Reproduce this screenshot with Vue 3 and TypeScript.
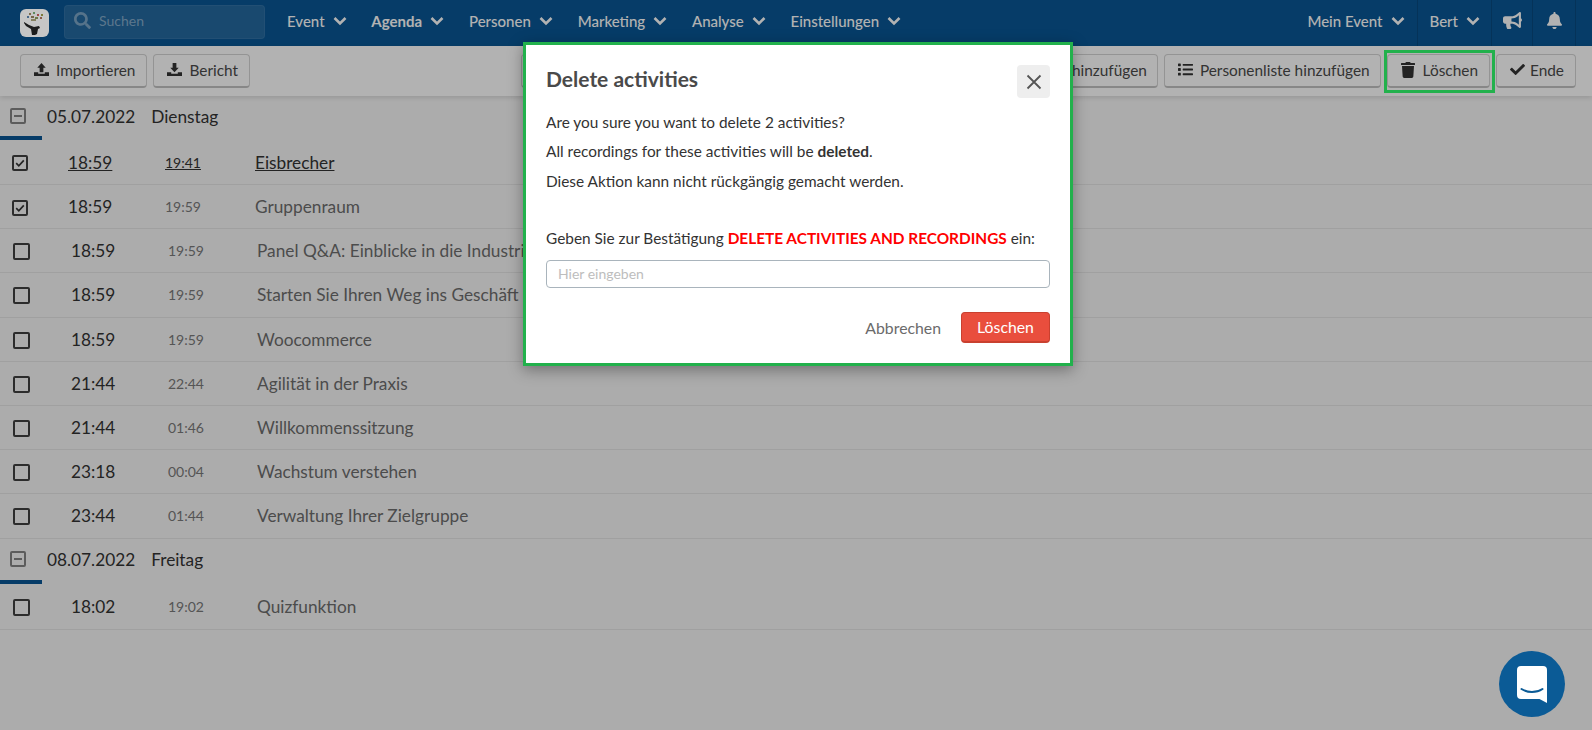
<script setup lang="ts">
interface Row { start: string; end: string; title: string; checked?: boolean; hover?: boolean }
interface Day { date: string; weekday: string; rows: Row[] }

const navItems = [
  { label: 'Event' },
  { label: 'Agenda', active: true },
  { label: 'Personen' },
  { label: 'Marketing' },
  { label: 'Analyse' },
  { label: 'Einstellungen' },
]

const days: Day[] = [
  {
    date: '05.07.2022',
    weekday: 'Dienstag',
    rows: [
      { start: '18:59', end: '19:41', title: 'Eisbrecher', checked: true, hover: true },
      { start: '18:59', end: '19:59', title: 'Gruppenraum', checked: true },
      { start: '18:59', end: '19:59', title: 'Panel Q&A: Einblicke in die Industrie' },
      { start: '18:59', end: '19:59', title: 'Starten Sie Ihren Weg ins Geschäft' },
      { start: '18:59', end: '19:59', title: 'Woocommerce' },
      { start: '21:44', end: '22:44', title: 'Agilität in der Praxis' },
      { start: '21:44', end: '01:46', title: 'Willkommenssitzung' },
      { start: '23:18', end: '00:04', title: 'Wachstum verstehen' },
      { start: '23:44', end: '01:44', title: 'Verwaltung Ihrer Zielgruppe' },
    ],
  },
  {
    date: '08.07.2022',
    weekday: 'Freitag',
    rows: [{ start: '18:02', end: '19:02', title: 'Quizfunktion' }],
  },
]
</script>

<template>
  <div class="page">
    <header class="topbar">
      <div class="logo">
        <svg viewBox="0 0 29 28" width="29" height="28">
          <rect x="9" y="4" width="2" height="2" fill="#7d6a4a" />
          <rect x="13" y="3" width="2" height="2" fill="#5f8a5f" />
          <rect x="17" y="5" width="2" height="2" fill="#a04a4a" />
          <rect x="21" y="5" width="2" height="2" fill="#7a7a3a" />
          <rect x="7" y="7" width="2" height="2" fill="#4a6a8a" />
          <rect x="11" y="7" width="3" height="2" fill="#77664a" />
          <rect x="15" y="8" width="3" height="2" fill="#6c7a4a" />
          <rect x="20" y="8" width="2" height="2" fill="#8a5a4a" />
          <rect x="11" y="10" width="5" height="2" fill="#85805f" />
          <path d="M4 13l5 3 5 2 5-1 1 2-2 1-1 5-2 1h-3l-1-6-5-3-2-3z" fill="#1c1c1c" />
        </svg>
      </div>
      <div class="search">
        <svg class="search-icon" viewBox="0 0 512 512" width="17" height="17">
          <path fill="currentColor" d="M505 442.700L405.300 343c-4.500-4.500-10.600-7-17-7H372c27.600-35.300 44-79.700 44-128C416 93.100 322.900 0 208 0S0 93.100 0 208s93.100 208 208 208c48.300 0 92.700-16.400 128-44v16.300c0 6.400 2.500 12.500 7 17l99.700 99.700c9.400 9.400 24.600 9.400 33.900 0l28.300-28.300c9.400-9.400 9.400-24.600.1-34zM208 336c-70.700 0-128-57.200-128-128 0-70.700 57.200-128 128-128 70.700 0 128 57.200 128 128 0 70.700-57.200 128-128 128z" />
        </svg>
        <span>Suchen</span>
      </div>
      <nav class="nav">
        <a v-for="item in navItems" :key="item.label" class="nav-item" :class="{ active: item.active }">
          {{ item.label }}
          <svg class="chev" viewBox="0 0 14 10" width="14" height="10"><path d="M1.500 2l5.500 5.500L12.500 2" fill="none" stroke="currentColor" stroke-width="2.600" /></svg>
        </a>
      </nav>
      <div class="top-right">
        <a class="nav-item tr tr-event">Mein Event
          <svg class="chev" viewBox="0 0 14 10" width="14" height="10"><path d="M1.500 2l5.500 5.500L12.500 2" fill="none" stroke="currentColor" stroke-width="2.600" /></svg>
        </a>
        <a class="nav-item tr tr-user">Bert
          <svg class="chev" viewBox="0 0 14 10" width="14" height="10"><path d="M1.500 2l5.500 5.500L12.500 2" fill="none" stroke="currentColor" stroke-width="2.600" /></svg>
        </a>
        <a class="tr tr-icon tr-horn">
          <svg viewBox="0 0 576 512" width="19" height="17"><path fill="currentColor" d="M576 240c0-23.600-13-44-32-55V32c0-9-7-32-32-32-7 0-14 2.400-20 7.100l-85 68C364.300 109.200 310.700 128 256 128H64c-35.300 0-64 28.700-64 64v96c0 35.300 28.700 64 64 64h33.700c-1.400 10.500-2.200 21.100-2.200 32 0 39.800 9.300 77.400 25.600 110.900 5.200 10.700 16.500 17.100 28.400 17.100h74.300c26.100 0 41.700-29.900 25.900-50.700-16.400-21.600-26.200-48.500-26.200-77.300 0-11.100 1.600-21.800 4.400-32H256c54.700 0 108.300 18.800 151 53l85 68c5.800 4.600 13 7 20 7 25 0 32-22.400 32-32V295c19-11 32-31.400 32-55zm-96 141.400l-33-26.400C391.900 311 325 288 256 288V192c69 0 135.900-23 191-67l33-26.400v282.800z" /></svg>
        </a>
        <a class="tr tr-icon tr-bell">
          <svg viewBox="0 0 448 512" width="15" height="17"><path fill="currentColor" d="M224 512c35.300 0 64-28.700 64-64H160c0 35.300 28.700 64 64 64zm215.400-149.700c-19.300-20.800-55.500-52-55.500-154.300 0-77.700-54.500-139.900-127.900-155.200V32c0-17.700-14.300-32-32-32s-32 14.300-32 32v20.800C118.600 68.100 64.100 130.300 64.100 208c0 102.300-36.200 133.500-55.500 154.300-6 6.400-8.700 14.100-8.600 21.700.1 16.400 13 32 32.100 32h383.800c19.100 0 32-15.600 32.100-32 .1-7.600-2.600-15.300-8.600-21.700z" /></svg>
        </a>
      </div>
    </header>

    <div class="toolbar">
      <button class="btn">
        <svg viewBox="0 0 16 16" width="15" height="15"><path fill="currentColor" d="M8 1l4.500 5H10v5H6V6H3.500L8 1zM0 11h4.500v1.500h7V11H16v4H0v-4z" /></svg>
        Importieren
      </button>
      <button class="btn">
        <svg viewBox="0 0 16 16" width="15" height="15"><path fill="currentColor" d="M6 1h4v5h2.500L8 11 3.500 6H6V1zM0 11h4.500v1.500h7V11H16v4H0v-4z" /></svg>
        Bericht
      </button>
      <div class="spacer"></div>
      <div class="covered">
        <button class="btn">Pause</button>
        <button class="btn">Sitzung hinzufügen</button>
      </div>
      <button class="btn btn-list">
        <svg viewBox="0 0 512 512" width="15" height="15"><path fill="currentColor" d="M80 368H16a16 16 0 0 0-16 16v64a16 16 0 0 0 16 16h64a16 16 0 0 0 16-16v-64a16 16 0 0 0-16-16zm0-320H16A16 16 0 0 0 0 64v64a16 16 0 0 0 16 16h64a16 16 0 0 0 16-16V64a16 16 0 0 0-16-16zm0 160H16a16 16 0 0 0-16 16v64a16 16 0 0 0 16 16h64a16 16 0 0 0 16-16v-64a16 16 0 0 0-16-16zm416 176H176a16 16 0 0 0-16 16v32a16 16 0 0 0 16 16h320a16 16 0 0 0 16-16v-32a16 16 0 0 0-16-16zm0-320H176a16 16 0 0 0-16 16v32a16 16 0 0 0 16 16h320a16 16 0 0 0 16-16V80a16 16 0 0 0-16-16zm0 160H176a16 16 0 0 0-16 16v32a16 16 0 0 0 16 16h320a16 16 0 0 0 16-16v-32a16 16 0 0 0-16-16z" /></svg>
        Personenliste hinzufügen
      </button>
      <button class="btn btn-del">
        <svg viewBox="0 0 448 512" width="14" height="16"><path fill="currentColor" d="M432 32H312l-9.400-18.700A24 24 0 0 0 281.100 0H166.800a23.700 23.700 0 0 0-21.400 13.300L136 32H16A16 16 0 0 0 0 48v32a16 16 0 0 0 16 16h416a16 16 0 0 0 16-16V48a16 16 0 0 0-16-16zM53.200 467a48 48 0 0 0 47.900 45h245.800a48 48 0 0 0 47.900-45L416 128H32z" /></svg>
        Löschen
      </button>
      <button class="btn btn-end">
        <svg viewBox="0 0 512 512" width="15" height="15"><path fill="currentColor" d="M173.900 439.400l-166.400-166.400c-10-10-10-26.200 0-36.200l36.200-36.200c10-10 26.200-10 36.200 0L192 312.700 432.100 72.600c10-10 26.200-10 36.200 0l36.200 36.200c10 10 10 26.200 0 36.200l-294.400 294.400c-10 10-26.200 10-36.200 0z" /></svg>
        Ende
      </button>
    </div>

    <main class="agenda">
      <section v-for="day in days" :key="day.date" class="day">
        <div class="day-head">
          <span class="collapse"><i></i></span>
          <span class="day-date">{{ day.date }}</span>
          <span class="day-name">{{ day.weekday }}</span>
        </div>
        <div v-for="row in day.rows" :key="row.title" class="row" :class="{ sel: row.checked, hover: row.hover }">
          <span class="check">
            <svg v-if="row.checked" viewBox="0 0 12 12" width="12" height="12"><path d="M2.200 6.200l2.600 2.600 5-5.400" fill="none" stroke="currentColor" stroke-width="1.700" /></svg>
          </span>
          <span class="t-start">{{ row.start }}</span>
          <span class="t-end">{{ row.end }}</span>
          <span class="t-title">{{ row.title }}</span>
        </div>
      </section>
    </main>

    <div class="backdrop"></div>

    <div class="mark"></div>

    <div class="modal-wrap">
      <div class="modal">
        <div class="modal-head">
          <h2>Delete activities</h2>
          <button class="close" aria-label="Schließen">
            <svg viewBox="0 0 18 18" width="18" height="18"><path d="M2.500 2.500l13 13M15.500 2.500l-13 13" stroke="currentColor" stroke-width="1.800" fill="none" /></svg>
          </button>
        </div>
        <p>Are you sure you want to delete 2 activities?</p>
        <p>All recordings for these activities will be <b>deleted</b>.</p>
        <p>Diese Aktion kann nicht rückgängig gemacht werden.</p>
        <label class="confirm">Geben Sie zur Bestätigung <b>DELETE ACTIVITIES AND RECORDINGS</b> ein:</label>
        <input class="field" placeholder="Hier eingeben" />
        <div class="actions">
          <button class="cancel">Abbrechen</button>
          <button class="danger">Löschen</button>
        </div>
      </div>
    </div>

    <button class="chat" aria-label="Chat">
      <svg viewBox="0 0 30 37" width="30" height="37">
        <path fill="#fff" d="M4 0h22a4 4 0 0 1 4 4v33l-7.500-4H4a4 4 0 0 1-4-4V4a4 4 0 0 1 4-4z" />
        <path d="M4.500 23c6 4 15 4 21 0" fill="none" stroke="#0b5b96" stroke-width="2" stroke-linecap="round" />
      </svg>
    </button>
  </div>
</template>

<style>
html, body { margin: 0; padding: 0; overflow: hidden; }
</style>

<style scoped>
.page {
  position: relative;
  width: 1592px;
  height: 730px;
  overflow: hidden;
  background: #f7f7f7;
  font-family: Lato, "Noto Sans", sans-serif;
  color: #333;
}
.topbar {
  display: flex;
  align-items: center;
  height: 46px;
  background: #0a5795;
  color: #fff;
  padding-left: 20px;
  box-sizing: border-box;
}
.logo {
  width: 29px;
  height: 28px;
  flex: none;
  border-radius: 6px;
  background: #c6c6c6;
  position: relative;
  z-index: 6;
}
.logo svg { display: block; }
.search {
  display: flex;
  align-items: center;
  gap: 8px;
  box-sizing: border-box;
  width: 201px;
  height: 34px;
  margin: 0 0 2px 15px;
  padding: 0 0 3px 9px;
  border-radius: 4px;
  background: rgba(255, 255, 255, .11);
  border: 1px solid rgba(255, 255, 255, .06);
  font-size: 14px;
  color: rgba(255, 255, 255, .45);
}
.search-icon { color: rgba(255, 255, 255, .4); }
.nav { display: flex; margin-left: 22px; gap: 24.800px; }
.nav-item {
  display: flex;
  align-items: center;
  gap: 8px;
  font-size: 15px;
  font-weight: 500;
  white-space: nowrap;
  color: #fff;
  padding-bottom: 5px;
}
.nav-item.active { font-weight: 700; }
.chev { display: block; }
.top-right { display: flex; margin-left: auto; align-items: stretch; height: 46px; }
.tr { box-sizing: border-box; display: flex; align-items: center; justify-content: center; border-right: 1px solid rgba(0, 0, 0, .14); height: 46px; padding-bottom: 5px; }
.tr-event { padding-right: 12px; }
.tr-user { padding-left: 12px; padding-right: 11px; }
.tr-horn { width: 41px; }
.tr-bell { width: 43px; margin-right: 16px; }
.tr-icon { color: #fff; }

.toolbar {
  display: flex;
  align-items: center;
  gap: 6px;
  height: 50px;
  padding: 0 16px 0 20px;
  box-sizing: border-box;
  background: #fff;
  box-shadow: 0 2px 5px rgba(0, 0, 0, .12);
  position: relative;
}
.spacer { flex: 1; }
.covered { display: flex; gap: 6px; width: 636.500px; flex: none; }
.covered .btn { flex: 1; min-width: 0; justify-content: flex-end; padding-right: 10px; }
.btn {
  display: flex;
  align-items: center;
  gap: 7px;
  height: 34px;
  padding: 0 11px 2px 13px;
  box-sizing: border-box;
  background: #fff;
  border: 1px solid #d4d4d4;
  border-bottom: 2px solid #c2c2c2;
  border-radius: 4px;
  font: inherit;
  font-size: 15.400px;
  color: #4a4a4a;
  white-space: nowrap;
}
.btn svg { color: #333; flex: none; }
.btn-list { padding-right: 10px; }
.btn-del { gap: 8px; }
.btn-end { gap: 5px; }

.agenda { display: block; }
.day-head {
  position: relative;
  display: flex;
  align-items: center;
  height: 44px;
  box-sizing: border-box;
  padding: 0 0 4px 10px;
  font-size: 17.250px;
  color: #333;
}
.day + .day .day-head { height: 45.300px; }
.day-head::after {
  content: "";
  position: absolute;
  left: 0;
  bottom: 0;
  width: 42px;
  height: 4px;
  background: #0a5795;
}
.collapse {
  box-sizing: border-box;
  width: 16px;
  height: 16px;
  border: 2px solid #858585;
  border-radius: 2px;
  display: flex;
  align-items: center;
  justify-content: center;
}
.collapse i { display: block; width: 8px; height: 2px; background: #858585; }
.day-date { margin-left: 21px; }
.day-name { margin-left: 16px; }
.row {
  display: flex;
  align-items: center;
  height: 44.200px;
  box-sizing: border-box;
  border-bottom: 1px solid #e6e6e6;
  padding-left: 13px;
}
.day-head + .row { height: 45px; }
.day + .day .row { height: 46px; }
.check {
  box-sizing: border-box;
  flex: none;
  width: 17px;
  height: 17px;
  margin-top: 2px;
  border: 2px solid #3f3f3f;
  border-radius: 2px;
  display: flex;
  align-items: center;
  justify-content: center;
  color: #333;
}
.sel .check { width: 16px; height: 16px; margin-left: -1px; }
.t-start { margin-left: 41px; width: 97px; font-size: 17.250px; color: #333; }
.sel .t-start { margin-left: 40px; }
.t-end { width: 89px; font-size: 14px; color: #7a7a7a; }
.sel .t-end { width: 90px; }
.t-title { font-size: 17.250px; color: #6d6d6d; white-space: nowrap; }
.hover .t-start, .hover .t-end, .hover .t-title { text-decoration: underline; color: #333; }

.backdrop { position: absolute; inset: 0; background: rgba(0, 0, 0, .3); z-index: 5; }
.mark {
  position: absolute;
  left: 1384px;
  top: 50px;
  width: 111px;
  height: 43px;
  box-sizing: border-box;
  border: 3px solid #22b14c;
  z-index: 6;
}
.modal-wrap {
  position: absolute;
  top: 42px;
  left: 523px;
  z-index: 7;
}
.modal {
  box-sizing: border-box;
  width: 550px;
  height: 324px;
  background: #fff;
  border: 3px solid #22b14c;
  box-shadow: 0 4px 14px rgba(0, 0, 0, .35);
  padding: 20px 20px 0;
  color: #333;
}
.modal-head { display: flex; align-items: center; justify-content: space-between; height: 33px; margin-bottom: 15px; }
.modal-head h2 { margin: 0; padding-bottom: 6px; font-size: 21px; font-weight: 700; color: #4a4a4a; }
.close {
  width: 33px;
  height: 33px;
  border: 0;
  border-radius: 4px;
  background: #eee;
  color: #555;
  padding: 0;
  display: flex;
  align-items: center;
  justify-content: center;
}
.modal p { margin: 0 0 11.400px; font-size: 15.400px; line-height: 18px; }
.modal p b { font-weight: 700; }
.confirm { display: block; margin-top: 39px; font-size: 15.400px; line-height: 18px; }
.confirm b { color: #f00; font-weight: 700; }
.field {
  display: block;
  box-sizing: border-box;
  width: 100%;
  height: 28px;
  margin-top: 13px;
  padding: 0 11px;
  border: 1px solid #a9b4bc;
  border-radius: 4px;
  font: inherit;
  font-size: 14px;
  outline: none;
}
.field::placeholder { color: #bdbdbd; }
.actions { display: flex; justify-content: flex-end; align-items: center; margin-top: 24px; gap: 20px; }
.cancel { border: 0; background: none; padding: 0; font: inherit; font-size: 15.800px; color: #6b6b6b; }
.danger {
  box-sizing: border-box;
  width: 89px;
  height: 31px;
  border: 1px solid #c9402f;
  border-bottom-width: 2px;
  border-radius: 4px;
  background: #e94e3d;
  color: #fff;
  font: inherit;
  font-size: 15.800px;
}
.chat {
  position: absolute;
  left: 1499px;
  top: 651px;
  width: 66px;
  height: 66px;
  border: 0;
  padding: 0;
  border-radius: 50%;
  background: #0b5b96;
  z-index: 8;
  display: flex;
  align-items: center;
  justify-content: center;
}
</style>
